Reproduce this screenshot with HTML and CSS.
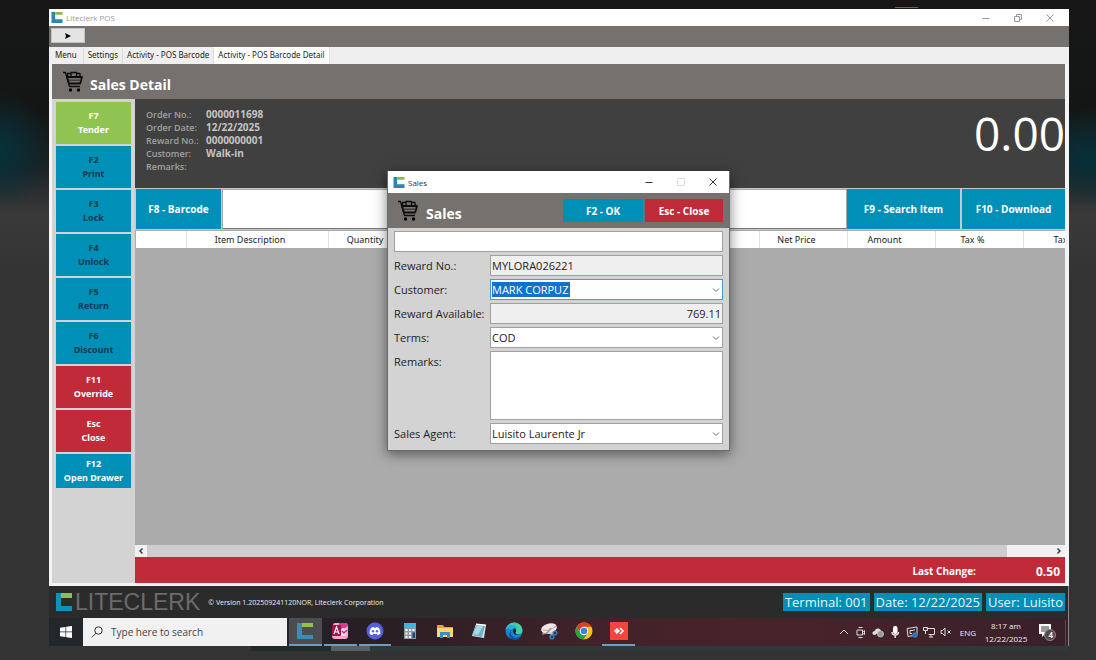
FILE: index.html
```html
<!DOCTYPE html>
<html lang="en">
<head>
<meta charset="utf-8">
<title>Liteclerk POS</title>
<link rel="stylesheet" href="styles.css">
</head>
<body>
<svg class="defs" width="0" height="0" aria-hidden="true">
  <symbol id="logo" viewBox="0 0 12 12">
    <path fill="#2b87ad" d="M0 0h4v8h8v4H0z"/>
    <path fill="#8cb84e" d="M4 0h8v3H4z"/>
  </symbol>
  <symbol id="cart" viewBox="0 0 22 22">
    <g fill="none" stroke="#0c0c0c" stroke-width="1.300" stroke-linejoin="round">
      <path d="M1 1.500h2.500L7.500 15.500H18"/>
      <path stroke-width="1.800" d="M5 6h15l-1.800 6.500H7z"/>
      <path d="M5.500 5.500V2.500h3.500v3M9 4V1.500h5.500V5.500M14.500 2.500H18v3"/>
      <path stroke="#3a3837" d="M6.500 9.200h12"/>
    </g>
    <circle cx="8.500" cy="19" r="1.700"/><circle cx="16.500" cy="19" r="1.700"/>
  </symbol>
  <symbol id="min" viewBox="0 0 10 10"><path d="M1.500 5.500h7" fill="none" stroke="currentColor"/></symbol>
  <symbol id="max" viewBox="0 0 10 10"><path d="M1.500 1.500h7v7h-7z" fill="none" stroke="currentColor"/></symbol>
  <symbol id="restore" viewBox="0 0 10 10"><path d="M1.500 3.500h5v5h-5zM3.500 3V1.500h5v5H7" fill="none" stroke="currentColor"/></symbol>
  <symbol id="close" viewBox="0 0 10 10"><path d="M1.500 1.500l7 7M8.500 1.500l-7 7" fill="none" stroke="currentColor"/></symbol>
  <symbol id="down" viewBox="0 0 8 8"><path d="M1 2.500l3 3 3-3" fill="none" stroke="#777"/></symbol>
</svg>

<i class="red-mark"></i>
<div class="screen">
  <header class="titlebar">
    <svg class="title-logo"><use href="#logo"/></svg>
    <span class="title-text">Liteclerk POS</span>
    <button class="win-btn" aria-label="Minimize"><svg><use href="#min"/></svg></button>
    <button class="win-btn" aria-label="Restore"><svg><use href="#restore"/></svg></button>
    <button class="win-btn" aria-label="Close"><svg><use href="#close"/></svg></button>
  </header>
  <div class="toolbar"><button class="play" aria-label="Toggle menu"><svg viewBox="0 0 8 6"><path d="M1 0l6 3-6 3 1-3z"/></svg></button></div>
  <nav class="tabs">
    <button class="tab">Menu</button>
    <button class="tab">Settings</button>
    <button class="tab">Activity - POS Barcode</button>
    <button class="tab active">Activity - POS Barcode Detail</button>
  </nav>

  <div class="page">
    <div class="page-head">
      <svg class="cart"><use href="#cart"/></svg>
      <h1>Sales Detail</h1>
    </div>
    <div class="columns">
      <aside class="sidebar">
        <button class="key green">F7<br>Tender</button>
        <button class="key" disabled>F2<br>Print</button>
        <button class="key" disabled>F3<br>Lock</button>
        <button class="key" disabled>F4<br>Unlock</button>
        <button class="key" disabled>F5<br>Return</button>
        <button class="key" disabled>F6<br>Discount</button>
        <button class="key red">F11<br>Override</button>
        <button class="key red">Esc<br>Close</button>
        <button class="key short">F12<br>Open Drawer</button>
      </aside>
      <main class="main">
        <section class="order">
          <dl>
            <dt>Order No.:</dt><dd>0000011698</dd>
            <dt>Order Date:</dt><dd>12/22/2025</dd>
            <dt>Reward No.:</dt><dd>0000000001</dd>
            <dt>Customer:</dt><dd>Walk-in</dd>
            <dt>Remarks:</dt><dd></dd>
          </dl>
          <output class="total">0.00</output>
        </section>
        <div class="search-row">
          <button class="act barcode">F8 - Barcode</button>
          <input class="barcode-input" type="text" aria-label="Barcode">
          <button class="act search-item">F9 - Search Item</button>
          <button class="act download">F10 - Download</button>
        </div>
        <div class="grid">
          <table>
            <colgroup><col class="c-mark"><col class="c-item"><col class="c-std"><col><col class="c-std"><col class="c-std"><col class="c-std"><col class="c-std"></colgroup>
            <thead><tr><th></th><th>Item Description</th><th>Quantity</th><th></th><th>Net Price</th><th>Amount</th><th>Tax %</th><th>Tax</th></tr></thead>
          </table>
        </div>
        <div class="scrollbar">
          <button class="arrow" aria-label="Scroll left"><svg viewBox="0 0 8 8"><path d="M5.500 1.500L3 4l2.500 2.500" fill="none" stroke="#333" stroke-width="1.400"/></svg></button>
          <div class="thumb"></div>
          <button class="arrow" aria-label="Scroll right"><svg viewBox="0 0 8 8"><path d="M2.500 1.500L5 4 2.500 6.500" fill="none" stroke="#333" stroke-width="1.400"/></svg></button>
        </div>
        <div class="change"><span>Last Change:</span><output>0.50</output></div>
      </main>
    </div>
  </div>

  <footer class="status">
    <svg class="brand-logo" viewBox="0 0 16 18" preserveAspectRatio="none"><path fill="#1191b5" d="M0 0h5v13h11v5H0z"/><path fill="#8cc152" d="M5 0h11v5H5z"/></svg>
    <span class="brand">LITECLERK</span>
    <span class="version">© Version 1.202509241120NOR, Liteclerk Corporation</span>
    <span class="badge">Terminal: 001</span>
    <span class="badge">Date: 12/22/2025</span>
    <span class="badge">User: Luisito</span>
  </footer>

  <div class="taskbar">
    <button class="start" aria-label="Start"><svg viewBox="0 0 12 12"><path fill="#fff" d="M0 1.700l5.500-.8v4.700H0zM6.200.8L12 0v5.600H6.200zM0 6.300h5.500V11L0 10.300zM6.200 6.300H12V12l-5.800-.8z"/></svg></button>
    <label class="search">
      <svg viewBox="0 0 12 12"><circle cx="7.500" cy="4.500" r="3.700" fill="none" stroke="#333"/><path d="M5 7.200L.8 11.400" stroke="#333" fill="none"/></svg>
      <input type="text" placeholder="Type here to search" aria-label="Search">
    </label>
    <div class="apps">
      <button class="app open current" aria-label="Liteclerk"><svg viewBox="0 0 18 18"><path fill="#3a8db5" d="M1 1h5v12h11v4H1z"/><path fill="#93c052" d="M6 1h11v4H6z"/></svg></button>
      <button class="app open" aria-label="Access"><svg viewBox="0 0 18 18"><path fill="#f5a6cb" d="M2 3q0-2 2-2h10q3 0 3 3v10q0 3-3 3H4q-3 0-3-3z"/><path fill="#d83b87" d="M8 1h6q3 0 3 3l-3 2q-3 2-6 0z"/><path fill="#fce4ef" d="M11 6l5 1-1 6-5 1z"/><rect x="1" y="3" width="9" height="11" rx="1" fill="#a4124f"/><path d="M3 12L5.500 5 8 12M4 10h3" fill="none" stroke="#fff" stroke-width="1.200"/><path d="M11 9l2 2 3-3" stroke="#c2266f" fill="none" stroke-width="1.500"/></svg></button>
      <button class="app open" aria-label="Discord"><svg viewBox="0 0 18 18"><circle cx="9" cy="9" r="8.500" fill="#5560e0"/><path fill="#fff" d="M5 6q1.500-1 2.600-1l.5.800h1.800l.5-.8Q11.500 5 13 6q1.700 3 1.400 5.800Q13 13 11.500 13l-.7-1.100H7.200L6.500 13Q5 13 3.600 11.800 3.300 9 5 6z"/><circle cx="7" cy="9.300" r="1.200" fill="#5560e0"/><circle cx="11" cy="9.300" r="1.200" fill="#5560e0"/></svg></button>
      <button class="app" aria-label="Calculator"><svg viewBox="0 0 18 18"><path fill="#8d9aa3" d="M3 1h12v16H3z"/><path fill="#3eb5e5" d="M3 1h12v4H3z"/><path fill="#fff" d="M4.500 7h2v2h-2zM8 7h2v2H8zM11.500 7h2v2h-2zM4.500 10.500h2v2h-2zM8 10.500h2v2H8zM4.500 14h2v2h-2zM8 14h2v2H8z"/><path fill="#174a7c" d="M11.500 10.500h2.500V16h-2.500z"/></svg></button>
      <button class="app" aria-label="File Explorer"><svg viewBox="0 0 18 18"><path fill="#e0a52e" d="M1 3h6l1.500 2H17v10H1z"/><path fill="#fcd870" d="M1 6h16v9H1z"/><path fill="#3b8ed0" d="M4 10h10v6h-3v-3H7v3H4z"/></svg></button>
      <button class="app" aria-label="Notepad"><svg viewBox="0 0 18 18"><path fill="#d9e2e6" d="M6 2l10 1-2 13-12-2z"/><path fill="#6fb1c9" d="M6 3l9 1-3 11-10-2z"/><path fill="#a8d8e6" d="M7 3l6 1-5 9-5-1z"/><path fill="#fff" d="M6 1.500l10 1v1.200l-10-1z"/></svg></button>
      <button class="app" aria-label="Edge"><svg viewBox="0 0 18 18"><circle cx="9" cy="9" r="8.500" fill="#1685cf"/><path fill="#48cf9d" d="M1 6Q4 0 10 .6q7 1 7.500 8.400-.5 3-4 3-3 0-3-1.500Q13 6 8 5 3 4 .8 7.500z"/><path fill="#25aee0" d="M.6 8Q2 3 6 3q5 0 6.500 3.500Q9 4.500 6.500 8 3 5 .6 8z"/><path fill="#0c4f9e" d="M6.500 7.500Q4 13 9 15.500q4 1.500 7-2-3 7-9.500 3.500-5-4 0-9.500z"/><path fill="#26202a" d="M8 7.500q2-1.500 3 .5.500 1.500-.7 2.700Q10 12 13 12.500q-5 1.500-5-5z"/></svg></button>
      <button class="app" aria-label="Snipping Tool"><svg viewBox="0 0 18 18"><ellipse cx="9" cy="6.500" rx="8" ry="5" fill="#efe6e6" transform="rotate(-15 9 6.500)"/><path d="M3 8q6 2 13-4" stroke="#d99" fill="none"/><path d="M2 12q6 0 9-6" stroke="#999" fill="none" stroke-width="1.500"/><path d="M8 11l6 1M10 15l3-5" stroke="#ccc" stroke-width="1.400"/><g fill="none" stroke="#2d7fc4" stroke-width="1.500"><circle cx="15" cy="11" r="1.800"/><circle cx="12" cy="15" r="1.800"/></g></svg></button>
      <button class="app" aria-label="Chrome"><svg viewBox="0 0 18 18"><circle cx="9" cy="9" r="8.500" fill="#fbc116"/><path fill="#e33b2e" d="M1.600 4.800A8.500 8.500 0 0 1 16.400 4.800H9L5.400 11z"/><path fill="#27a04b" d="M1.600 4.800A8.500 8.500 0 0 0 8.600 17.500L12.600 11 9 13 5.400 11z"/><circle cx="9" cy="9" r="4.300" fill="#fff"/><circle cx="9" cy="9" r="3.300" fill="#3f80ea"/></svg></button>
      <button class="app open" aria-label="AnyDesk"><svg viewBox="0 0 18 18"><path fill="#f2453d" d="M0 0h18v18H0z"/><path fill="#fff" d="M4 9l3-3 3 3-3 3z"/><path d="M10 6l3 3-3 3" fill="none" stroke="#fff" stroke-width="1.600"/></svg></button>
    </div>
    <div class="tray">
      <svg viewBox="0 0 12 12"><path d="M2 8l4-4 4 4"/></svg>
      <svg viewBox="0 0 12 12"><path d="M2 4h5.500v5H2zM7.500 6l2-1.500v4l-2-1.500M3.500 1.500h4M3.500 11.500h4"/></svg>
      <svg viewBox="0 0 12 12"><path fill="#ddd" stroke="none" d="M3 9Q0 9 .5 6.500 1 5 2.500 5 3.500 2 6.500 2.500 9 3 9 5z"/><circle cx="8.500" cy="8" r="3" fill="#999" stroke="#bbb"/></svg>
      <svg viewBox="0 0 12 12"><rect x="4" y="0" width="4.500" height="8" rx="2" fill="#fff" stroke="none"/><path stroke-width="1.500" d="M3 6q0 3 3.200 3t3.200-3M6.200 9v3"/></svg>
      <svg viewBox="0 0 12 12"><path d="M1 2.500L11 1v8l-9 1.500zM4 4.500h3M4 4.500v3h2M8 3v2"/><circle cx="9" cy="9" r="2.700" fill="#2f74c8" stroke="none"/></svg>
      <svg viewBox="0 0 12 12"><path d="M3.500 2.500h8v6h-6M8 8.500v2.500M6 11h4M.5 1.500h4v3h-4zM2.500 4.500V8"/></svg>
      <svg viewBox="0 0 12 12"><path d="M1 4.500h1.500L5 2v8L2.500 7.500H1zM7.500 4.500l3 3M10.500 4.500l-3 3"/></svg>
      <span class="lang">ENG</span>
      <time class="clock">8:17 am<br>12/22/2025</time>
      <div class="notify"><svg viewBox="0 0 18 18"><path fill="#fff" d="M1 1h12v10H7l-3 3v-3H1z"/><path d="M3 4h8M3 6h8M3 8h8" stroke="#443036"/><circle cx="12" cy="12" r="5.500" fill="#54494d" stroke="#888"/></svg><b>4</b></div>
      <i class="peek"></i>
    </div>
  </div>

  <form class="dialog">
    <div class="dialog-title">
      <svg class="title-logo"><use href="#logo"/></svg>
      <span class="title-text">Sales</span>
      <button type="button" class="win-btn" aria-label="Minimize"><svg><use href="#min"/></svg></button>
      <button type="button" class="win-btn" aria-label="Maximize" disabled><svg><use href="#max"/></svg></button>
      <button type="button" class="win-btn" aria-label="Close"><svg><use href="#close"/></svg></button>
    </div>
    <div class="dialog-head">
      <svg class="cart"><use href="#cart"/></svg>
      <h2>Sales</h2>
      <button type="button" class="cmd">F2 - OK</button>
      <button type="button" class="cmd red">Esc - Close</button>
    </div>
    <div class="fields">
      <input class="wide" type="text" aria-label="Scan reward card">
      <label for="reward-no">Reward No.:</label>
      <input id="reward-no" type="text" value="MYLORA026221" readonly>
      <label for="customer">Customer:</label>
      <span class="combo focused"><select id="customer"><option>MARK CORPUZ</option></select><svg><use href="#down"/></svg></span>
      <label for="available">Reward Available:</label>
      <input id="available" class="num" type="text" value="769.11" readonly>
      <label for="terms">Terms:</label>
      <span class="combo"><select id="terms"><option>COD</option></select><svg><use href="#down"/></svg></span>
      <label for="remarks">Remarks:</label>
      <textarea id="remarks"></textarea>
      <label for="agent">Sales Agent:</label>
      <span class="combo"><select id="agent"><option>Luisito Laurente Jr</option></select><svg><use href="#down"/></svg></span>
    </div>
  </form>
</div>
<div class="under"><i class="under-dark"></i><i class="under-light"></i><i class="under-rest"></i></div>
</body>
</html>
```
FILE: styles.css
```css
* { box-sizing: border-box; }

body {
  margin: 0;
  min-height: 100vh;
  padding: 9px 27px 0 49px;
  display: flex;
  flex-direction: column;
  font-family: "Open Sans", "Noto Sans", sans-serif;
  font-size: 11px;
  color: #222;
  background:
    radial-gradient(ellipse 50px 60px at 0 150px, #06323c, transparent),
    radial-gradient(ellipse 60px 50px at 1090px 158px, #06303a, transparent),
    linear-gradient(#171717 0, #141616 110px, #192123 165px, #3a3a3a 215px, #333 280px);
}

button, input, select, textarea {
  font: inherit;
  color: inherit;
  margin: 0;
  padding: 0;
  border: 0;
  border-radius: 0;
  outline: 0;
}
button { background: none; }
h1, h2, dl, dd { margin: 0; }
.defs { position: absolute; }

.red-mark {
  position: absolute;
  left: 895px;
  top: 7px;
  width: 23px;
  height: 1px;
  background: #c0403c;
}

.screen {
  position: relative;
  flex: 1;
  display: flex;
  flex-direction: column;
}

/* Window chrome */
.titlebar, .dialog-title {
  display: flex;
  align-items: center;
  background: #fff;
}
.titlebar { height: 17px; padding: 0 3px 0 2px; color: #999; }
.title-logo { width: 12px; height: 11px; }
.title-text { flex: 1; padding-left: 3px; font-size: 8px; }
.win-btn { width: 32px; height: 16px; display: grid; place-items: center; }
.win-btn svg { width: 10px; height: 10px; }
.toolbar { height: 21px; padding: 2px; background: #75716f; }
.play {
  width: 34px;
  height: 15px;
  display: grid;
  place-items: center;
  background: #e4e4e4;
  border: 1px solid #c4c4c4;
}
.play svg { width: 8px; height: 6px; }

.tabs { display: flex; align-items: flex-end; height: 17px; background: #efefef; }
.tab {
  height: 16px;
  padding: 0 4px 2px;
  font-family: "Noto Sans", sans-serif;
  font-size: 8px;
  line-height: 14px;
  border-right: 1px solid #dcdcdc;
}
.tab:first-child { padding: 0 6px 2px; }
.tab.active { height: 17px; background: #fff; }

/* Sales page */
.page {
  flex: 1;
  display: flex;
  flex-direction: column;
  padding: 0 4px 3px 3px;
  background: #f4f4f4;
}
.page-head {
  height: 35px;
  display: flex;
  align-items: center;
  gap: 6px;
  padding-left: 10px;
  background: #75716f;
}
.cart { width: 22px; height: 22px; }
h1, h2 { padding-top: 6px; font-size: 14px; line-height: 20px; color: #fff; }
.columns { flex: 1; display: flex; }
.sidebar {
  width: 83px;
  padding: 3px 4px;
  display: flex;
  flex-direction: column;
  gap: 2px;
  background: #d3d3d3;
}
.key {
  height: 42px;
  background: #008fb7;
  color: #fff;
  font-family: "Noto Sans", sans-serif;
  font-size: 9px;
  font-weight: 700;
  line-height: 14px;
}
.key:disabled { color: #083c50; }
.key.green { background: #8fc352; }
.key.short { height: 34px; }
.red, .key.red { background: #c12a39; }

.main { flex: 1; min-width: 0; display: flex; flex-direction: column; }
.order {
  height: 89px;
  display: flex;
  justify-content: space-between;
  padding: 9px 0 0 11px;
  background: #404040;
  color: #a0a0a0;
}
.order dl {
  display: grid;
  grid-template-columns: 60px auto;
  align-content: start;
  font-size: 9px;
  font-weight: 600;
  line-height: 13px;
}
.order dd { font-size: 10px; font-weight: 700; color: #c4c4c4; }
.total { font-size: 46px; font-weight: 500; line-height: 50px; color: #fff; }

.search-row {
  height: 42px;
  display: flex;
  padding: 1px 0 1px 1px;
  background: #c3c9cb;
}
.act {
  background: #008fb7;
  color: #fff;
  font-size: 10px;
  font-weight: 700;
}
.barcode { width: 85px; }
.barcode-input {
  flex: 1;
  min-width: 0;
  margin-left: 1px;
  border: 1px solid #aaa;
  border-bottom-color: #777;
  background: #fff;
}
.search-item { width: 113px; }
.download { width: 103px; margin-left: 2px; }

.grid { flex: 1; padding: 1px 0 0 1px; overflow: hidden; background: #ababab; }
table {
  width: calc(100% + 47px);
  table-layout: fixed;
  border-collapse: collapse;
  background: #fff;
}
th {
  height: 17px;
  padding: 0 14px 0 0;
  border-right: 1px solid #e2e2e2;
  font-family: "Noto Sans", sans-serif;
  font-size: 9px;
  font-weight: 400;
  white-space: nowrap;
}
.c-mark { width: 50px; }
.c-item { width: 142px; }
.c-std { width: 88px; }

.scrollbar { height: 12px; display: flex; background: #f0f0f0; }
.arrow { width: 12px; display: grid; place-items: center; }
.arrow svg { width: 8px; height: 8px; }
.thumb { flex: 1; margin-right: 46px; background: #cdcdcd; }
.change {
  height: 26px;
  display: flex;
  align-items: center;
  justify-content: flex-end;
  gap: 60px;
  padding: 2px 5px 0 0;
  background: #c12a39;
  color: #fff;
  font-size: 10px;
  font-weight: 700;
}
.change output { font-size: 12px; }

/* Status line */
.status {
  height: 32px;
  display: flex;
  align-items: center;
  gap: 4px;
  padding: 0 3px 0 7px;
  background: #2b2b2b;
  border-right: 1px solid #888;
}
.brand-logo { width: 16px; height: 18px; }
.brand {
  margin-left: -1px;
  font-family: "Liberation Sans", sans-serif;
  font-size: 23px;
  color: #6b6b6b;
}
.version { flex: 1; padding-left: 4px; font-size: 7px; color: #eee; }
.badge {
  padding: 0 2px;
  background: #008fb7;
  color: #e8f6fa;
  font-size: 13px;
  line-height: 18px;
}

/* Taskbar */
.taskbar {
  height: 28px;
  display: flex;
  background: linear-gradient(90deg, #23262b 230px, #261f24 300px, #43222a 560px, #48232b 740px, #38202a);
  border-right: 1px solid #888;
}
.start { width: 34px; display: grid; place-items: center; }
.start svg { width: 12px; height: 12px; }
.search {
  width: 204px;
  display: flex;
  align-items: center;
  gap: 8px;
  padding-left: 8px;
  background: #f1f1f1;
}
.search svg { width: 12px; height: 12px; }
.search input { flex: 1; min-width: 0; background: none; font-size: 10px; }
.search input::placeholder { color: #444; opacity: 1; }
.apps {
  width: 348px;
  margin-left: 2px;
  display: grid;
  grid-template-columns: repeat(10, 1fr);
}
.app { display: grid; place-items: center; margin-right: 2px; border-bottom: 2px solid transparent; }
.app.open { border-bottom-color: #6f9cc4; }
.app.current { background: #4c4d50; }
.app svg { width: 18px; height: 18px; }
.tray {
  margin-left: auto;
  display: flex;
  align-items: center;
  gap: 5px;
  color: #eee;
  font-size: 8px;
}
.tray > svg { width: 12px; height: 12px; fill: none; stroke: #ddd; }
.lang { padding-left: 3px; }
.clock { width: 50px; font-size: 8px; line-height: 13px; text-align: center; }
.notify { position: relative; margin-left: 2px; width: 18px; height: 18px; }
.notify svg { width: 18px; height: 18px; }
.notify b { position: absolute; right: 3px; bottom: 0; font-size: 8px; line-height: 12px; }
.peek { align-self: stretch; margin: 2px 2px 0 4px; border-left: 1px solid #5d4a50; }

.under { height: 14px; display: flex; }
.under i { height: 5px; }
.under-dark { width: 80px; margin-left: 202px; background: #232b27; }
.under-light { width: 39px; background: #596062; }
.under-rest { flex: 1; background: #2f393b; }

/* Sales dialog */
.dialog {
  position: absolute;
  left: 338px;
  top: 162px;
  width: 343px;
  background: #d3d3d3;
  border: 1px solid #6b6b6b;
  border-top: 0;
  box-shadow: 0 3px 12px rgba(0, 0, 0, .5);
}
.dialog-title { height: 22px; padding: 0 0 0 5px; color: #333; }
.dialog-title .win-btn:disabled { color: #ddd; }
.dialog-head {
  height: 35px;
  display: flex;
  align-items: center;
  padding: 0 6px 0 9px;
  background: #75716f;
}
h2 { flex: 1; padding-left: 7px; }
.cmd {
  width: 80px;
  height: 23px;
  margin-left: 2px;
  background: #008fb7;
  color: #fff;
  font-size: 10px;
  font-weight: 700;
}
.cmd.red { width: 78px; background: #c12a39; }

.fields {
  display: grid;
  grid-template-columns: 93px 1fr;
  gap: 3px;
  padding: 3px 6px 6px 6px;
}
.fields label { line-height: 21px; white-space: nowrap; }
.fields input, .fields textarea, .combo {
  height: 21px;
  border: 1px solid #a0a0a0;
  background: #fff;
}
.fields input { width: 100%; padding: 0 1px; }
.fields .wide { grid-column: 1 / -1; }
.fields input:read-only { background: #efefef; }
.fields .num { text-align: right; }
.fields textarea { height: 69px; resize: none; display: block; }
.combo { display: grid; grid-template-columns: 1fr 10px; align-items: center; }
.combo select {
  grid-area: 1 / 1 / 2 / 3;
  width: 100%;
  height: 19px;
  padding: 0 1px;
  appearance: none;
  background: none;
}
.combo svg { grid-area: 1 / 2; width: 8px; height: 8px; pointer-events: none; }
.combo.focused { border-color: #4a9ad4; }
.combo.focused select {
  color: #fff;
  background: linear-gradient(#0f72cc, #0f72cc) 1px 2px / 78px 15px no-repeat;
}
```
